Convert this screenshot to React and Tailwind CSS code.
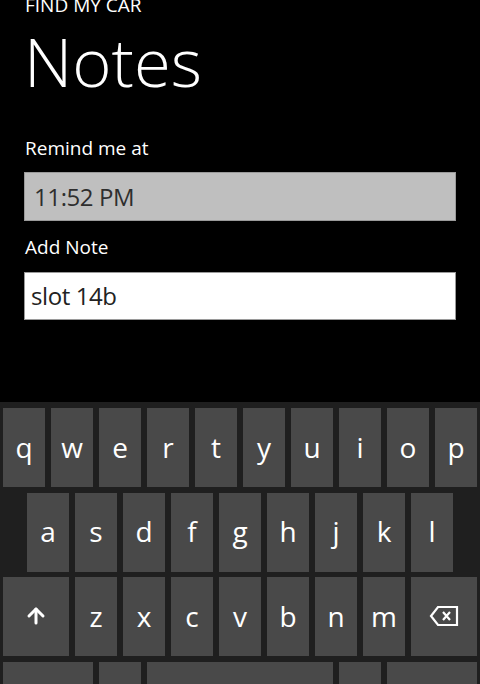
import { ArrowUp } from "lucide-react";

const font = { fontFamily: '"Open Sans", "Noto Sans", sans-serif' };

function Key({ children, w = "w-[42px]" }) {
  return (
    <div className={`${w} h-[79px] shrink-0 bg-[#494949] flex items-center justify-center text-white text-[28px] leading-none pb-[2px]`}>
      {children}
    </div>
  );
}

function Backspace() {
  return (
    <svg width="30" height="22" viewBox="0 0 30 22" fill="none" stroke="white" strokeWidth="2.2" strokeLinejoin="miter">
      <path d="M9 2 H28 V20 H9 L2 11 Z" />
      <path d="M14 7 L21 15 M21 7 L14 15" />
    </svg>
  );
}

export default function App() {
  const row1 = ["q", "w", "e", "r", "t", "y", "u", "i", "o", "p"];
  const row2 = ["a", "s", "d", "f", "g", "h", "j", "k", "l"];
  const row3 = ["z", "x", "c", "v", "b", "n", "m"];

  return (
    <div className="w-[480px] h-[684px] bg-black overflow-hidden flex flex-col" style={font}>
      {/* page header */}
      <div className="pl-[25px]">
        <div className="text-white text-[19px] leading-none -mt-[4px] h-[19px]">FIND MY CAR</div>
        <div className="text-white text-[67px] font-light leading-none mt-[13px] -ml-[1px]">Notes</div>
      </div>

      {/* form */}
      <div className="px-[24px] mt-[44px]">
        <div className="text-white text-[19px] leading-none pl-[1px]">Remind me at</div>
        <div className="mt-[14px] h-[49px] bg-[#bfbfbf] border border-[#9a9a9a] flex items-center pl-[9px] text-[#2e2e2e] text-[24px] tracking-[-0.4px]">
          11:52 PM
        </div>
        <div className="text-white text-[19px] leading-none pl-[1px] mt-[17px]">Add Note</div>
        <div className="mt-[15px] h-[48px] bg-white border border-[#9a9a9a] flex items-center pl-[6px] text-[#222] text-[24px] tracking-[-0.4px]">
          slot 14b
        </div>
      </div>

      {/* keyboard */}
      <div className="mt-auto h-[282px] bg-[#1f1f1f] pt-[6px] flex flex-col gap-[5.5px]">
        <div className="flex gap-[6px] pl-[3px]">
          {row1.map((k) => (
            <Key key={k}>{k}</Key>
          ))}
        </div>
        <div className="flex gap-[6px] pl-[27px]">
          {row2.map((k) => (
            <Key key={k}>{k}</Key>
          ))}
        </div>
        <div className="flex gap-[6px] pl-[3px]">
          <Key w="w-[66px]">
            <ArrowUp size={24} strokeWidth={3} />
          </Key>
          {row3.map((k) => (
            <Key key={k}>{k}</Key>
          ))}
          <Key w="w-[66px]">
            <Backspace />
          </Key>
        </div>
        <div className="flex gap-[6px] pl-[3px]">
          <Key w="w-[90px]" />
          <Key />
          <Key w="w-[186px]" />
          <Key />
          <Key w="w-[90px]" />
        </div>
      </div>
    </div>
  );
}
